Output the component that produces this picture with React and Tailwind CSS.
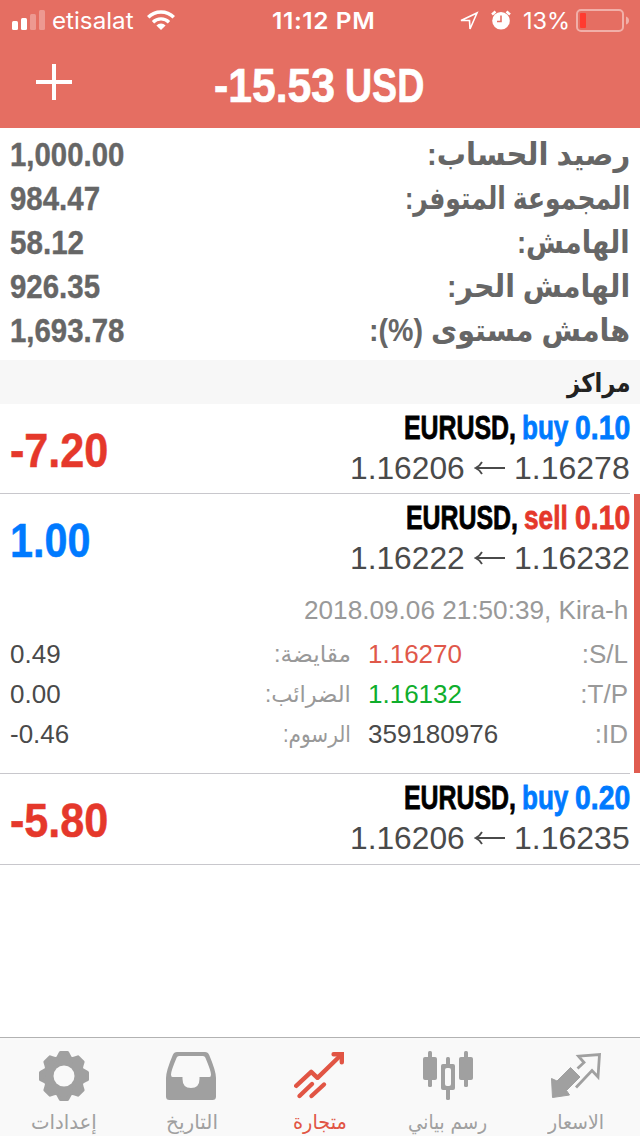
import React, { useLayoutEffect, useRef, useState } from "react";
import clsx from "clsx";

const summary = [
  { label: "رصيد الحساب:", labelWidth: 203, value: "1,000.00", width: 114 },
  { label: "المجموعة المتوفر:", labelWidth: 225, value: "984.47", width: 90 },
  { label: "الهامش:", labelWidth: 113, value: "58.12", width: 74 },
  { label: "الهامش الحر:", labelWidth: 183, value: "926.35", width: 90 },
  { label: "هامش مستوى (%):", labelWidth: 261, value: "1,693.78", width: 114 },
];

const details = [
  { key: "S/L", value: "1.16270", color: "text-[#e0584a]", label: "مقايضة:", width: 77, amount: "0.49" },
  { key: "T/P", value: "1.16132", color: "text-[#0fae2c]", label: "الضرائب:", width: 86, amount: "0.00" },
  { key: "ID", value: "359180976", color: "text-[#4a4a4a]", label: "الرسوم:", width: 68, amount: "-0.46" },
];

const tabs = [
  { label: "إعدادات", width: 66, icon: GearIcon },
  { label: "التاريخ", width: 52, icon: InboxIcon },
  { label: "متجارة", width: 54, icon: TradeIcon, active: true },
  { label: "رسم بياني", width: 79, icon: CandlesIcon },
  { label: "الاسعار", width: 56, icon: QuotesIcon },
];

// Condenses (or stretches) a line of text to the given width
function Fit({ width, dir = "ltr", className, children }) {
  const ref = useRef(null);
  const [scale, setScale] = useState(1);

  useLayoutEffect(() => {
    setScale(width / ref.current.offsetWidth);
  }, [width, children]);

  return (
    <span dir={dir} className={clsx("flex shrink-0 justify-start", className)} style={{ width }}>
      <span
        ref={ref}
        className={clsx("shrink-0 whitespace-pre", dir === "rtl" ? "origin-right" : "origin-left")}
        style={{ transform: `scaleX(${scale})` }}
      >
        {children}
      </span>
    </span>
  );
}

function GearIcon() {
  return (
    <svg width="50" height="50" viewBox="-25 -25 50 50" fill="currentColor" stroke="currentColor" strokeLinejoin="round">
      <circle r="19.8" stroke="none" />
      {[0, 45, 90, 135, 180, 225, 270, 315].map((a) => (
        <path key={a} d="M-7 -17 Q-5.5 -19 -3.4 -23.2 H3.4 Q5.5 -19 7 -17 Z" strokeWidth="3.6" transform={`rotate(${a})`} />
      ))}
      <circle r="10.5" fill="#f9f9f9" stroke="none" />
    </svg>
  );
}

function InboxIcon() {
  return (
    <svg className="mr-0.5" width="50" height="50" viewBox="0 0 50 50" fill="currentColor" fillRule="evenodd">
      <path d="M11 1 H39 Q42 1 43.2 4 Q50 20 50 27 V45.5 Q50 49 46.5 49 H3.5 Q0 49 0 45.5 V27 Q0 20 6.8 4 Q8 1 11 1 Z M13 5 Q11.3 5 10.6 6.8 Q5 20 5 23.5 Q5 26 6.5 26 H16.5 V28 Q16.5 37 25 37 Q33.5 37 33.5 28 V26 H43.5 Q45 26 45 23.5 Q45 20 39.4 6.8 Q38.7 5 37 5 Z" />
    </svg>
  );
}

function TradeIcon() {
  return (
    <svg className="mr-0.5" width="50" height="50" viewBox="0 0 50 50" fill="none" stroke="currentColor" strokeWidth="4.4" strokeLinecap="round" strokeLinejoin="round">
      <path d="M2.2 34.8 L17.2 20.8 L23.5 26.8 L46 5" />
      <path d="M39.6 3.2 H47.8 V11.2" strokeLinejoin="miter" />
      <path d="M42 3 L48 9 V3 Z" fill="currentColor" stroke="none" />
      <path d="M5.5 45 L18 33 M17.5 45 L30 33.5" />
    </svg>
  );
}

function CandlesIcon() {
  return (
    <svg width="50" height="50" viewBox="0 0 50 50" fill="currentColor">
      <rect x="5" y="0" width="4" height="36" rx="1.5" />
      <rect x="0" y="6" width="14" height="23" rx="2" />
      <rect x="41" y="0" width="4" height="36" rx="1.5" />
      <rect x="36" y="6" width="14" height="23" rx="2" />
      <rect x="23" y="6" width="4" height="43" rx="1.5" />
      <rect x="18" y="13" width="14" height="26" rx="2" />
      <rect x="22" y="17" width="6" height="18" rx="2" fill="#f9f9f9" />
    </svg>
  );
}

function QuotesIcon() {
  return (
    <svg width="50" height="50" viewBox="0 0 50 50">
      <path d="M0.5 27.5 L6 30 L19.5 16.5 L29 26 L15.5 39.5 L18.5 44 L1.5 46.5 Z" fill="currentColor" stroke="currentColor" strokeLinejoin="round" />
      <path d="M26.5 17.5 L33 11.5 L27.5 5.2 L48.5 3.5 L47 26 L41 19.5 L25 36.5" fill="none" stroke="currentColor" strokeWidth="2.8" />
    </svg>
  );
}

function StatusBar() {
  return (
    <div className="grid h-10 grid-cols-[1fr_auto_1fr] items-center pl-3 pr-[11px] font-['Inter',sans-serif] text-[23px] leading-[38px]">
      <div className="flex items-center">
        <svg width="34" height="20" viewBox="0 0 34 20" fill="white">
          <rect x="0" y="11" width="6" height="9" rx="1.5" />
          <rect x="9" y="8" width="6" height="12" rx="1.5" />
          <rect x="18" y="4" width="6" height="16" rx="1.5" opacity=".3" />
          <rect x="27" y="0" width="6" height="20" rx="1.5" opacity=".3" />
        </svg>
        <Fit width={82} className="mr-[13px] ml-1.5 pt-0.5">etisalat</Fit>
        <svg width="28" height="20" viewBox="0 0 28 20" fill="none" stroke="white" strokeWidth="3.6">
          <path d="M1.2 7.3 A18.2 18.2 0 0 1 26.8 7.3" />
          <path d="M6 12.2 A11.5 11.5 0 0 1 22 12.2" strokeWidth="3.3" />
          <path d="M14 20 L9.4 15.5 A6.5 6.5 0 0 1 18.6 15.5 Z" fill="white" stroke="none" />
        </svg>
      </div>
      <Fit width={103} className="ml-1.5 pt-0.5 font-semibold tracking-wide">11:12 PM</Fit>
      <div className="flex items-center justify-end">
        <svg width="20" height="20" viewBox="0 0 20 20" fill="none" stroke="white" strokeWidth="1.6">
          <path d="M2 10.5 L18 3 L11 19 L10.5 10.5 Z" />
        </svg>
        <svg className="ml-3" width="20" height="20" viewBox="0 0 20 20">
          <circle cx="10" cy="10.8" r="8.8" fill="white" />
          <path d="M1 4.500 L4.5 1.5 M19 4.500 L15.5 1.5" stroke="white" strokeWidth="2.5" />
          <path d="M10 5.5 V11.5 H6" stroke="#e66f63" strokeWidth="1.6" fill="none" />
        </svg>
        <Fit width={47} className="mr-1.5 ml-3 pt-0.5">13%</Fit>
        <svg width="53" height="24" viewBox="0 0 53 24">
          <rect x="1" y="2" width="46" height="21" rx="4" fill="none" stroke="white" strokeOpacity=".45" strokeWidth="2" />
          <rect x="4" y="5" width="6" height="15" rx="1" fill="#ff3b30" />
          <path d="M50 8.5 Q53 9.5 53 12.5 Q53 15.5 50 16.5 Z" fill="white" fillOpacity=".45" />
        </svg>
      </div>
    </div>
  );
}

function Header() {
  return (
    <header className="h-32 bg-[#e56e62] text-white">
      <StatusBar />
      <div className="grid h-[88px] grid-cols-[1fr_auto_1fr] items-center">
        <svg className="mb-1 ml-9" width="36" height="36" viewBox="0 0 36 36" stroke="white" strokeWidth="4">
          <path d="M0 18 H36 M18 0 V36" />
        </svg>
        <h1 className="flex pt-[3px] pr-0.5 text-[48px] font-bold leading-none [-webkit-text-stroke:0.7px]">
          <Fit width={121}>-15.53</Fit>
          <Fit width={79} className="ml-2.5">USD</Fit>
        </h1>
      </div>
    </header>
  );
}

function Position({ side, volume, open, current, profit, children }) {
  const buy = side === "buy";
  return (
    <div>
      <div className="flex h-[89px] items-start justify-between px-2.5">
        <Fit
          width={profit < 0 ? 98 : 80}
          className={clsx(
            "pt-[22px] text-[48px] font-bold leading-[50px] [-webkit-text-stroke:0.5px]",
            profit < 0 ? "text-[#e5382b]" : "text-[#007aff]"
          )}
        >
          {profit}
        </Fit>
        <div>
          <div className="flex justify-end pt-[3px] text-[34px] font-bold leading-10 text-black [-webkit-text-stroke:0.8px]">
            <Fit width={112}>EURUSD,</Fit>
            <div className={clsx("flex", buy ? "text-[#007aff]" : "text-[#e5382b]")}>
              <Fit width={buy ? 46 : 44} className="ml-1.5">{side}</Fit>
              <Fit width={55} className="ml-[7px]">{volume}</Fit>
            </div>
          </div>
          <div className="flex items-center justify-end pt-px text-[32px] leading-10 text-[#4a4a4a]">
            <Fit width={115}>{current}</Fit>
            <svg className="mx-[9px]" width="31" height="14" viewBox="0 0 31 14" fill="none" stroke="currentColor" strokeWidth="1.8">
              <path d="M31 7 H1.5 M8 1 Q6 5 1.5 7 Q6 9 8 13" />
            </svg>
            <Fit width={116}>{open}</Fit>
          </div>
        </div>
      </div>
      {children}
    </div>
  );
}

export default function App() {
  return (
    <div className="flex h-[1136px] w-[640px] flex-col overflow-hidden bg-white font-['Liberation_Sans','DejaVu_Sans',sans-serif]">
      <Header />

      <section className="h-[232px] px-2.5 pt-[5px] text-[34px] font-bold text-[#666]">
        {summary.map((row) => (
          <div key={row.label} className="flex h-11 items-center justify-between leading-[44px]">
            <Fit width={row.width} className="pb-0.5 [-webkit-text-stroke:0.4px]">{row.value}</Fit>
            <Fit dir="rtl" width={row.labelWidth} className="text-[31px]">{row.label}</Fit>
          </div>
        ))}
      </section>

      <h2 className="flex h-11 justify-end bg-[#f7f7f7] px-2.5 text-[26px] font-bold leading-[46px] text-[#222]">
        <Fit dir="rtl" width={63}>مراكز</Fit>
      </h2>

      <Position side="buy" volume="0.10" open="1.16278" current="1.16206" profit="-7.20" />
      <div className="mr-2.5 h-px shrink-0 bg-[#c8c7cc]" />

      <div className="border-r-[6px] border-[#e05c50]">
        <div className="-mr-1.5">
          <Position side="sell" volume="0.10" open="1.16232" current="1.16222" profit="1.00">
            <div className="h-[190px] pt-[9px] text-[26px] text-[#999]">
              <div className="flex justify-end pr-3 leading-[36px]">
                <Fit width={324}>2018.09.06 21:50:39, Kira-h</Fit>
              </div>
              <div className="pt-1.5">
                {details.map((row) => (
                  <div key={row.key} className="grid h-10 grid-cols-[160px_181px_1fr_auto] items-center pl-2.5 pr-3 leading-10">
                    <span className="text-[#4a4a4a]">{row.amount}</span>
                    <Fit dir="rtl" width={row.width} className="justify-self-end text-[23px]">{row.label}</Fit>
                    <span className={clsx("pl-[17px]", row.color)}>{row.value}</span>
                    <span dir="rtl">{row.key}:</span>
                  </div>
                ))}
              </div>
            </div>
          </Position>
        </div>
      </div>
      <div className="mr-2.5 h-px shrink-0 bg-[#c8c7cc]" />

      <Position side="buy" volume="0.20" open="1.16235" current="1.16206" profit="-5.80" />
      <div className="mt-px h-px shrink-0 bg-[#c8c7cc]" />

      <nav className="mt-auto grid h-[99px] grid-cols-5 border-t border-[#b2b2b2] bg-[#f9f9f9]">
        {tabs.map(({ label, width, icon: Icon, active }) => (
          <div key={label} className={clsx("flex flex-col items-center pt-[13px]", active ? "text-[#e15544]" : "text-[#a0a0a0]")}>
            <Icon />
            <Fit dir="rtl" width={width} className="mt-1.5 font-['DejaVu_Sans',sans-serif] text-[20px] leading-[30px]">{label}</Fit>
          </div>
        ))}
      </nav>
    </div>
  );
}
